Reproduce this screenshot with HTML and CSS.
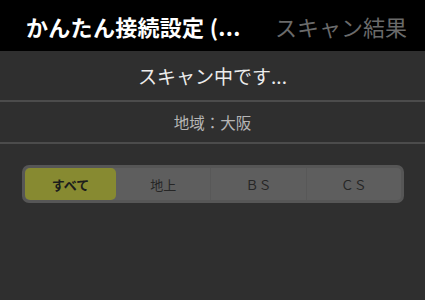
FILE: index.html
```html
<!DOCTYPE html>
<html lang="ja">
<head>
<meta charset="utf-8">
<link rel="stylesheet" href="styles.css">
</head>
<body>
<div class="app">
  <header class="nav">
    <div class="nav-title">かんたん接続設定 (...</div>
    <div class="nav-right">スキャン結果</div>
  </header>
  <div class="status">スキャン中です...</div>
  <div class="region">地域：大阪</div>
  <div class="seg-wrap">
    <div class="seg">
      <div class="seg-item active">すべて</div>
      <div class="seg-item">地上</div>
      <div class="seg-item sep">ＢＳ</div>
      <div class="seg-item sep">ＣＳ</div>
    </div>
  </div>
</div>
</body>
</html>
```
FILE: styles.css
```css
html, body {
  margin: 0;
  padding: 0;
  background: #2f2f2f;
}
body {
  width: 425px;
  height: 300px;
  overflow: hidden;
  font-family: "Noto Sans CJK JP", "Noto Sans", sans-serif;
}
.app {
  display: flex;
  flex-direction: column;
}
.nav {
  height: 51px;
  background: #000;
  display: flex;
  align-items: center;
  justify-content: space-between;
  padding: 0 18px 0 26px;
}
.nav-title {
  color: #fff;
  font-size: 22px;
  font-weight: 700;
  letter-spacing: 0.3px;
}
.nav-right {
  color: #6a6a6a;
  font-size: 22px;
}
.status {
  height: 49px;
  display: flex;
  align-items: center;
  justify-content: center;
  color: #ececec;
  font-size: 19px;
  border-bottom: 2px solid #4c4c4c;
}
.region {
  height: 40px;
  display: flex;
  align-items: center;
  justify-content: center;
  color: #b5b5b5;
  font-size: 15.5px;
  border-bottom: 2px solid #4c4c4c;
}
.seg-wrap {
  padding: 21px 21px 0 22px;
}
.seg {
  height: 32px;
  background: #5e5e5e;
  border: 3px solid #565656;
  border-radius: 7px;
  display: flex;
}
.seg-item {
  flex: 1;
  display: flex;
  align-items: center;
  justify-content: center;
  color: #262626;
  font-size: 13px;
}
.seg-item:first-child {
  flex: 0 0 91px;
}
.seg-item.sep {
  border-left: 1px solid #585858;
}
.seg-item.active {
  background: #878a31;
  border-radius: 5px;
  font-weight: 700;
  color: #1c1c1c;
}
```
